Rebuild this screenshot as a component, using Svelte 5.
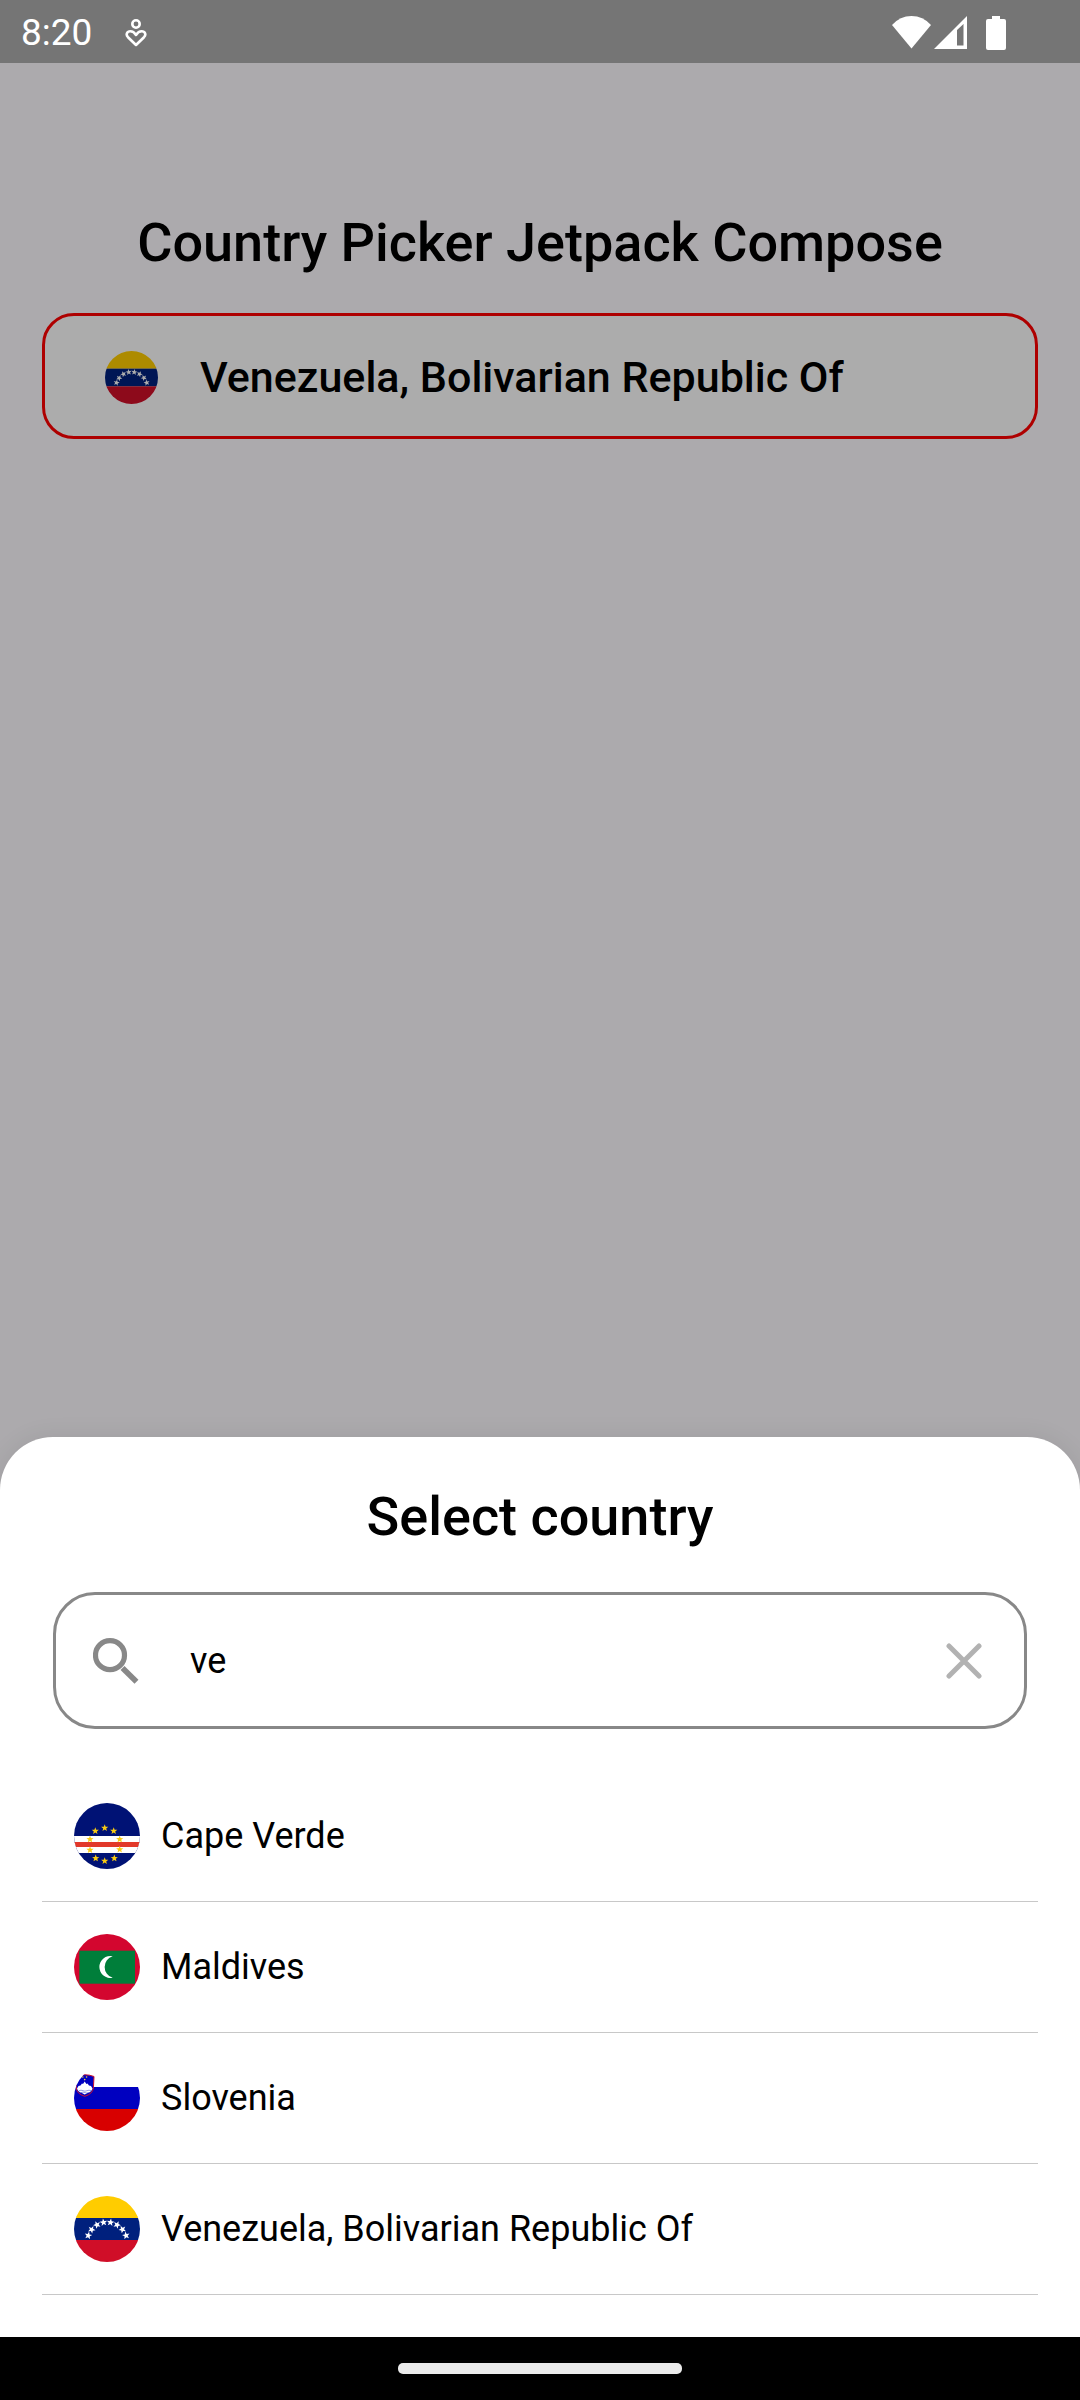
<script>
  let query = $state('ve');
  let selected = $state('ve');

  const countries = [
    { code: 'cv', name: 'Cape Verde' },
    { code: 'mv', name: 'Maldives' },
    { code: 'si', name: 'Slovenia' },
    { code: 've', name: 'Venezuela, Bolivarian Republic Of' }
  ];

  const matches = $derived(
    countries.filter((c) => c.name.toLowerCase().includes(query.toLowerCase()))
  );
  const current = $derived(countries.find((c) => c.code === selected));

  const capeVerdeStars = [
    [30.7, 25], [21.3, 28], [39.7, 28], [16, 36.3], [45.7, 36.3],
    [16, 47], [45.7, 46.5], [21.7, 55.3], [40.3, 55.3], [30.7, 58]
  ];
  const venezuelaStars = [
    [14.3, 39.5, -60], [17.6, 33.6, -45], [23, 28.8, -25], [29.5, 26.4, -8],
    [36.5, 26.4, 8], [43, 28.8, 25], [48.4, 33.4, 45], [52, 39.5, 60]
  ];

  function star(cx, cy, r, turn = 0) {
    const points = [];
    for (let i = 0; i < 10; i++) {
      const radius = i % 2 ? r * 0.42 : r;
      const angle = ((i * 36 - 90 + turn) * Math.PI) / 180;
      points.push(`${cx + radius * Math.cos(angle)},${cy + radius * Math.sin(angle)}`);
    }
    return points.join(' ');
  }
</script>

{#snippet flag(code)}
  <svg class="flag" viewBox="0 0 66 66" aria-hidden="true">
    {#if code === 'cv'}
      <rect width="66" height="66" fill="#001275" />
      <rect y="33" width="66" height="17" fill="#fff" />
      <rect y="39" width="66" height="5" fill="#e2382a" />
      {#each capeVerdeStars as [x, y]}
        <polygon points={star(x, y, 3.8)} fill="#f9cb12" />
      {/each}
    {:else if code === 'mv'}
      <rect width="66" height="66" fill="#d3062f" />
      <rect x="5.3" y="16.7" width="55.7" height="33" fill="#007e3a" />
      <path d="M38.7 22.3A11 11 0 1 0 38.7 43.8A11.200 11.200 0 0 1 38.7 22.3Z" fill="#fff" />
    {:else if code === 'si'}
      <rect width="66" height="66" fill="#fff" />
      <rect y="22" width="66" height="22" fill="#0000c0" />
      <rect y="44" width="66" height="22" fill="#d80000" />
      <path d="M1.6 11.5Q11 8 20 11.5L19.4 23Q18.6 29 10.8 31.3Q3 29 2.2 23Z" fill="#0000c0" stroke="#c8102e" stroke-width="1" />
      <path d="M3 23.5L4.500 21L6.500 20.500L8 18.500L9 19L10.7 16.500L12.400 19L13.500 18.500L15 20.500L17 21L18.500 23.500Q17.500 27 14 27.800L10.7 29.500L7.500 27.800Q4 27 3 23.5Z" fill="#fff" />
      <path d="M5 25.7Q7 24.7 9 25.7T13 25.7T17 25.7M7 27.6Q9 26.7 11 27.6T14.5 27.6" fill="none" stroke="#2a3fd0" stroke-width="0.5" />
      <circle cx="10.7" cy="14.6" r="0.8" fill="#f3cf3a" />
      <circle cx="8.8" cy="12" r="0.8" fill="#f3cf3a" />
      <circle cx="12.6" cy="12" r="0.8" fill="#f3cf3a" />
    {:else}
      <rect width="66" height="22" fill="#fc0" />
      <rect y="22" width="66" height="22" fill="#00207d" />
      <rect y="44" width="66" height="22" fill="#d00e28" />
      {#each venezuelaStars as [x, y, turn]}
        <polygon points={star(x, y, 4, turn)} fill="#fff" />
      {/each}
    {/if}
  </svg>
{/snippet}

<div class="screen">
  <header class="status">
    <time>8:20</time>
    <svg class="care" viewBox="0 0 22 28" fill="none" stroke="#fff" stroke-width="2.6" stroke-linejoin="round" aria-hidden="true">
      <circle cx="11" cy="5" r="3.7" />
      <path d="M11 26L3 18.2C.4 15.4 2 12.2 5.4 12.2C8 12.2 9.5 13.6 11 16C12.5 13.6 14 12.2 16.6 12.2C20 12.2 21.6 15.400 19 18.2Z" />
    </svg>
    <svg class="signals" viewBox="0 0 114 34" fill="#fff" aria-hidden="true">
      <path d="M0 9Q8 0 19.5 0T39 9L19.5 32.5Z" />
      <path fill-rule="evenodd" d="M42 33L75 0V33ZM65 14V29.5H71.5V8Z" />
      <path d="M100 0H108V3H112Q114 3 114 5V32Q114 34 112 34H96Q94 34 94 32V5Q94 3 96 3H100Z" />
    </svg>
  </header>

  <main class="page">
    <h1>Country Picker Jetpack Compose</h1>
    <button class="picker" type="button">
      {@render flag(current.code)}
      <span>{current.name}</span>
    </button>
  </main>

  <section class="sheet" aria-labelledby="sheet-title">
    <h2 id="sheet-title">Select country</h2>
    <div class="search">
      <svg class="lens" viewBox="0 0 46 46" fill="none" stroke="#888" aria-hidden="true">
        <circle cx="17" cy="17.2" r="14.5" stroke-width="5.2" />
        <path d="M29.5 30L43.5 43.8" stroke-width="5.6" />
      </svg>
      <input type="text" aria-label="Search country" bind:value={query} />
      <button class="clear" type="button" aria-label="Clear search" onclick={() => (query = '')}>
        <svg viewBox="0 0 36 36" fill="none" stroke="#b2b2b2" stroke-width="5" stroke-linecap="round" aria-hidden="true">
          <path d="M3 3L33 33M33 3L3 33" />
        </svg>
      </button>
    </div>
    <ul>
      {#each matches as country (country.code)}
        <li>
          <button type="button" onclick={() => (selected = country.code)}>
            {@render flag(country.code)}
            <span>{country.name}</span>
          </button>
        </li>
      {/each}
    </ul>
  </section>

  <footer class="nav"><span class="handle"></span></footer>
</div>

<style>
  :global(body) {
    background: #acaaad;
  }

  .screen {
    display: flex;
    flex-direction: column;
    min-height: 100vh;
    font-family: Roboto, "Liberation Sans", sans-serif;
    color: #000;
  }

  h1,
  h2 {
    margin: 0;
    font-size: 54px;
    line-height: 64px;
    font-weight: 500;
    text-align: center;
  }

  button {
    margin: 0;
    border: 0;
    background: none;
    font: inherit;
    color: inherit;
    text-align: left;
    cursor: pointer;
  }

  svg {
    display: block;
    flex: none;
  }

  .status {
    display: flex;
    align-items: center;
    box-sizing: border-box;
    height: 63px;
    padding: 2px 74px 0 21px;
    background: #757575;
    color: #fff;
    font-size: 37px;
  }

  .care {
    width: 22px;
    height: 28px;
    margin-left: 33px;
  }

  .signals {
    width: 114px;
    height: 34px;
    margin-left: auto;
  }

  .page {
    flex: 1;
    padding: 148px 42px 42px;
  }

  .picker {
    display: flex;
    align-items: center;
    gap: 42px;
    box-sizing: border-box;
    width: 100%;
    min-height: 126px;
    margin-top: 38px;
    padding: 2px 60px 0;
    border: 3px solid #ae0000;
    border-radius: 32px;
    background: #acacac;
    font-size: 43px;
    font-weight: 500;
  }

  .flag {
    width: 66px;
    height: 66px;
    border-radius: 50%;
  }

  .picker .flag {
    width: 53px;
    height: 53px;
    filter: brightness(0.68);
  }

  .sheet {
    padding: 48px 42px 42px;
    border-radius: 53px 53px 0 0;
    background: #fff;
    box-shadow: 0 0 24px rgba(0, 0, 0, 0.08);
  }

  .search {
    display: flex;
    align-items: center;
    box-sizing: border-box;
    min-height: 137px;
    margin: 43px 11px 42px;
    padding: 0 42px 0 37px;
    border: 3px solid #888;
    border-radius: 42px;
  }

  .lens {
    width: 46px;
    height: 46px;
  }

  input {
    flex: 1;
    min-width: 0;
    margin: 0 32px 0 51px;
    padding: 0;
    border: 0;
    outline: 0;
    background: none;
    font: inherit;
    font-size: 36px;
    line-height: 48px;
    color: #000;
  }

  .clear {
    padding: 0;
  }

  .clear svg {
    width: 36px;
    height: 36px;
  }

  ul {
    margin: 0;
    padding: 0;
    list-style: none;
  }

  li {
    border-bottom: 1px solid #c8c8c8;
  }

  li button {
    display: flex;
    align-items: center;
    gap: 21px;
    width: 100%;
    min-height: 130px;
    padding: 0 32px;
    font-size: 36px;
  }

  .nav {
    display: flex;
    align-items: center;
    justify-content: center;
    height: 63px;
    background: #000;
  }

  .handle {
    width: 284px;
    height: 11px;
    border-radius: 5px;
    background: #ebebeb;
  }
</style>
